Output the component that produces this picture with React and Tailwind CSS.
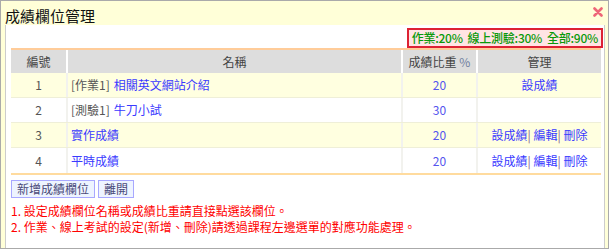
export default function App() {
  const rows = [
    { no: 1, tag: '[作業1]', name: '相關英文網站介紹', pct: 20, actions: ['設成績'] },
    { no: 2, tag: '[測驗1]', name: '牛刀小試', pct: 30, actions: [] },
    { no: 3, tag: '', name: '實作成績', pct: 20, actions: ['設成績', '編輯', '刪除'] },
    { no: 4, tag: '', name: '平時成績', pct: 20, actions: ['設成績', '編輯', '刪除'] },
  ];

  return (
    <div
      className="w-[609px] h-[249px] border border-[#aaaaaa] bg-[#ffffd8] flex flex-col"
      style={{ fontFamily: '"Noto Sans CJK TC", "Liberation Sans", sans-serif' }}
    >
      {/* Title bar */}
      <div className="h-[24px] flex items-center justify-between pl-[4px] pr-[5px] pt-[6px]">
        <span className="text-[15px] leading-[16px] text-[#111]">成績欄位管理</span>
        <svg width="10" height="10" viewBox="0 0 10 10" className="-mt-[8px]">
          <path d="M1.5 1.5 L8.5 8.5 M8.5 1.5 L1.5 8.5" stroke="#ee6677" strokeWidth="2.6" strokeLinecap="round" />
        </svg>
      </div>

      {/* Content panel */}
      <div className="flex-1 ml-[4px] mr-[3px] bg-white border-x border-[#cccccc] text-[12px] leading-[14px]">
        <div className="flex justify-end pr-[1px] pt-[3px]">
          <div className="h-[20px] px-[3px] flex items-center border-2 border-[#dd2233] bg-[#ffe4e4] text-[#0a9a0a] text-[12px] font-medium tracking-[-0.25px]">
            作業:20%&nbsp; 線上測驗:30%&nbsp; 全部:90%
          </div>
        </div>

        {/* Table */}
        <div className="ml-[5px] w-[590px] border-t-2 border-b-2 border-t-[#ffcc99] border-b-[#ffdb9e]">
          <div className="flex h-[23px] bg-[#dddddd] text-[#444]">
            <div className="w-[55px] flex items-center justify-center">編號</div>
            <div className="w-[335px] flex items-center justify-center border-l-2 border-white">名稱</div>
            <div className="w-[75px] flex items-center justify-center border-l-2 border-white">
              成績比重&nbsp;<span className="text-[#7080a0]">%</span>
            </div>
            <div className="flex-1 flex items-center justify-center border-l-2 border-white">管理</div>
          </div>
          {rows.map((r, i) => (
            <div
              key={r.no}
              className={`flex h-[25px] border-b border-[#efefd8] last:border-b-0 ${i % 2 === 0 ? 'bg-[#ffffe0]' : 'bg-white'}`}
            >
              <div className="w-[55px] flex items-center justify-center text-[#555]">{r.no}</div>
              <div className="w-[335px] flex items-center pl-[3px] border-l-2 border-[#f2f2ee]">
                {r.tag && <span className="text-[#555] mr-[4px]">{r.tag}</span>}
                <span className="text-[#3a3aff]">{r.name}</span>
              </div>
              <div className="w-[75px] flex items-center justify-center border-l-2 border-[#f2f2ee] text-[#5555ee]">
                {r.pct}
              </div>
              <div className="flex-1 flex items-center justify-center border-l-2 border-[#f2f2ee] text-[#3a3aff]">
                {r.actions.map((a, j) => (
                  <span key={a}>
                    {j > 0 && <span className="text-[#886688]">|&nbsp;</span>}
                    {a}
                  </span>
                ))}
              </div>
            </div>
          ))}
        </div>

        {/* Buttons */}
        <div className="flex gap-[3px] ml-[5px] mt-[5px]">
          <button className="h-[18px] px-[5px] border border-[#a8a8ff] bg-[#eef4ff] text-[#4a4a7a] text-[12px] leading-[14px]">
            新增成績欄位
          </button>
          <button className="h-[18px] px-[5px] border border-[#a8a8ff] bg-[#eef4ff] text-[#4a4a7a] text-[12px] leading-[14px]">
            離開
          </button>
        </div>

        {/* Notes */}
        <div className="ml-[5px] mt-[5px] text-[#ff0000] leading-[16px]">
          <p>1. 設定成績欄位名稱或成績比重請直接點選該欄位。</p>
          <p>2. 作業、線上考試的設定(新增、刪除)請透過課程左邊選單的對應功能處理。</p>
        </div>
      </div>
    </div>
  );
}
